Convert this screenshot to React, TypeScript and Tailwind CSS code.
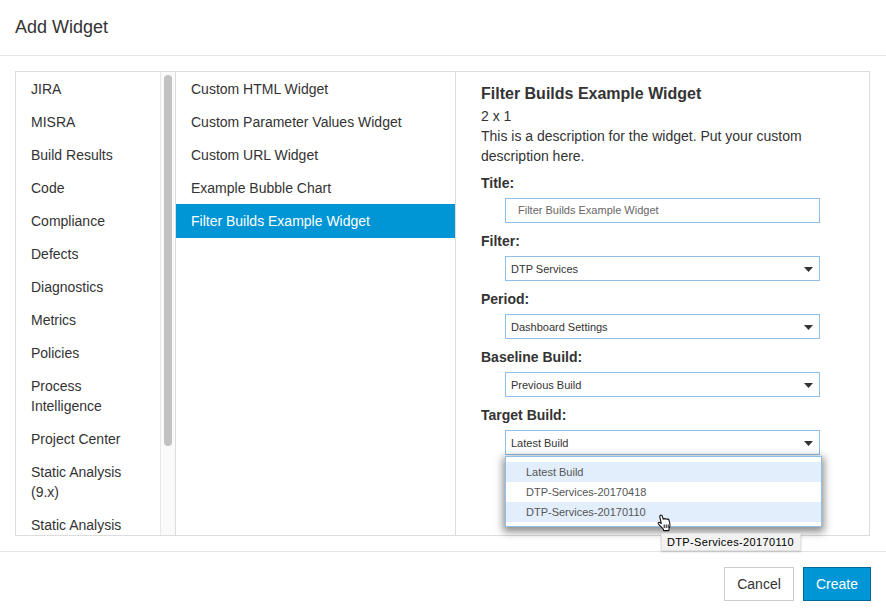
const categories = [
  'JIRA',
  'MISRA',
  'Build Results',
  'Code',
  'Compliance',
  'Defects',
  'Diagnostics',
  'Metrics',
  'Policies',
  'Process Intelligence',
  'Project Center',
  'Static Analysis (9.x)',
  'Static Analysis',
];

const widgets = [
  'Custom HTML Widget',
  'Custom Parameter Values Widget',
  'Custom URL Widget',
  'Example Bubble Chart',
  'Filter Builds Example Widget',
];

const selects = [
  { label: 'Filter:', value: 'DTP Services' },
  { label: 'Period:', value: 'Dashboard Settings' },
  { label: 'Baseline Build:', value: 'Previous Build' },
  { label: 'Target Build:', value: 'Latest Build' },
];

function Caret() {
  return (
    <svg width="9" height="5" viewBox="0 0 9 5" className="mr-[6px]">
      <path d="M0 0h9L4.5 5z" fill="#333333" />
    </svg>
  );
}

function HandCursor() {
  return (
    <svg width="15" height="18" viewBox="0 0 15 18" className="absolute left-[-1px] top-[-1px]">
      <path
        d="M3.2 1.4c.8-.6 1.8-.2 2.1.7l1 3.2c.1-.8 1.5-1 1.9 0 .3-.7 1.5-.8 1.9.1.4-.5 1.5-.4 1.8.4l.9 3.6c.4 1.8.1 3.6-.7 5.1l-.3 2.1H6.6l-.4-1.6C5 13.600 3.200 12 1.300 9.800c-.6-.8.200-1.900 1.200-1.400l1.800 1.100L2.800 3.100c-.1-.7 0-1.300.4-1.700z"
        fill="#ffffff"
        stroke="#111111"
        strokeWidth="1.1"
        strokeLinejoin="round"
      />
      <path d="M7.200 10.500v3.500M9.200 10.500v3.500M11.200 10.500v3.500" stroke="#111111" strokeWidth="1" fill="none" />
    </svg>
  );
}

export default function App() {
  return (
    <div className="flex h-[616px] w-[886px] flex-col overflow-hidden bg-white font-['Liberation_Sans',Arial,sans-serif] text-[14px] text-[#333333]">
      <div className="h-[56px] border-b border-[#e5e5e5] pl-[15px] pt-[16px] text-[18px] leading-[23px]">
        Add Widget
      </div>

      <div className="mx-[15px] mt-[15px] flex h-[465px] w-[855px] border border-[#dddddd]">
        {/* Categories */}
        <div className="flex w-[159px] shrink-0">
          <div className="h-full w-[144px] overflow-hidden">
            {categories.map((name) => (
              <div key={name} className="py-[6.5px] pl-[15px] pr-[20px] leading-[20px]">
                {name}
              </div>
            ))}
          </div>
          <div className="h-full w-[15px] shrink-0 border-l border-[#e8e8e8] bg-[#fafafa] px-[3px] pt-[3px]">
            <div className="h-[371px] rounded-[4px] bg-[#c2c2c2]" />
          </div>
        </div>

        {/* Widgets */}
        <div className="w-[281px] shrink-0 border-r border-l border-[#dddddd]">
          {widgets.map((name, i) => (
            <div
              key={name}
              className={
                i === 4
                  ? 'h-[34px] bg-[#0095d5] pl-[15px] pt-[7px] leading-[20px] text-white'
                  : 'h-[33px] pl-[15px] pt-[7px] leading-[20px]'
              }
            >
              {name}
            </div>
          ))}
        </div>

        {/* Details */}
        <div className="relative flex-1 pl-[25px] pt-[10px]">
          <div className="text-[16px] font-bold leading-[24px]">Filter Builds Example Widget</div>
          <div className="leading-[20px]">2 x 1</div>
          <div className="w-[340px] leading-[20px]">
            This is a description for the widget. Put your custom description here.
          </div>

          <div className="mt-[7px] font-bold leading-[20px]">Title:</div>
          <div className="ml-[24px] mt-[5px] flex h-[25px] w-[315px] items-center border border-[#8fbfe8] pl-[12px] text-[11px] text-[#666666]">
            Filter Builds Example Widget
          </div>

          {selects.map((field) => (
            <div key={field.label}>
              <div className="mt-[8px] font-bold leading-[20px]">{field.label}</div>
              <div className="ml-[24px] mt-[5px] flex h-[25px] w-[315px] items-center justify-between border border-[#8fbfe8] pl-[5px] pt-[1px] text-[11px]">
                <span>{field.value}</span>
                <Caret />
              </div>
            </div>
          ))}

          {/* Open dropdown */}
          <div className="absolute left-[49px] top-[384px] h-[71px] w-[317px] border border-[#8fbfe8] bg-white py-[5px] text-[11px] text-[#555555] shadow-[0_3px_8px_2px_rgba(0,0,0,0.45)]">
            <div className="h-[20px] bg-[#e2eefc] pl-[20px] leading-[20px]">Latest Build</div>
            <div className="h-[20px] pl-[20px] leading-[20px]">DTP-Services-20170418</div>
            <div className="h-[20px] bg-[#e2eefc] pl-[20px] leading-[20px]">DTP-Services-20170110</div>
          </div>
        </div>
      </div>

      <div className="mt-[15px] flex flex-1 justify-end gap-[9px] border-t border-[#e5e5e5] pr-[15px] pt-[15px]">
        <div className="flex h-[34px] w-[70px] items-center justify-center border border-[#cccccc] text-[#333333]">
          Cancel
        </div>
        <div className="flex h-[34px] w-[68px] items-center justify-center border border-[#00699a] bg-[#0095d5] text-white">
          Create
        </div>
      </div>

      {/* Browser tooltip and pointer over the open list */}
      <div className="absolute left-[661px] top-[533px] flex h-[18px] w-[140px] items-center border border-[#e2e2e2] bg-[#f2f2f2] pl-[5px] text-[11px] tracking-[0.35px] text-black shadow-[0_1px_2px_rgba(0,0,0,0.2)]">
        DTP-Services-20170110
      </div>
      <div className="absolute left-[658px] top-[515px] h-[18px] w-[15px]">
        <HandCursor />
      </div>
    </div>
  );
}
